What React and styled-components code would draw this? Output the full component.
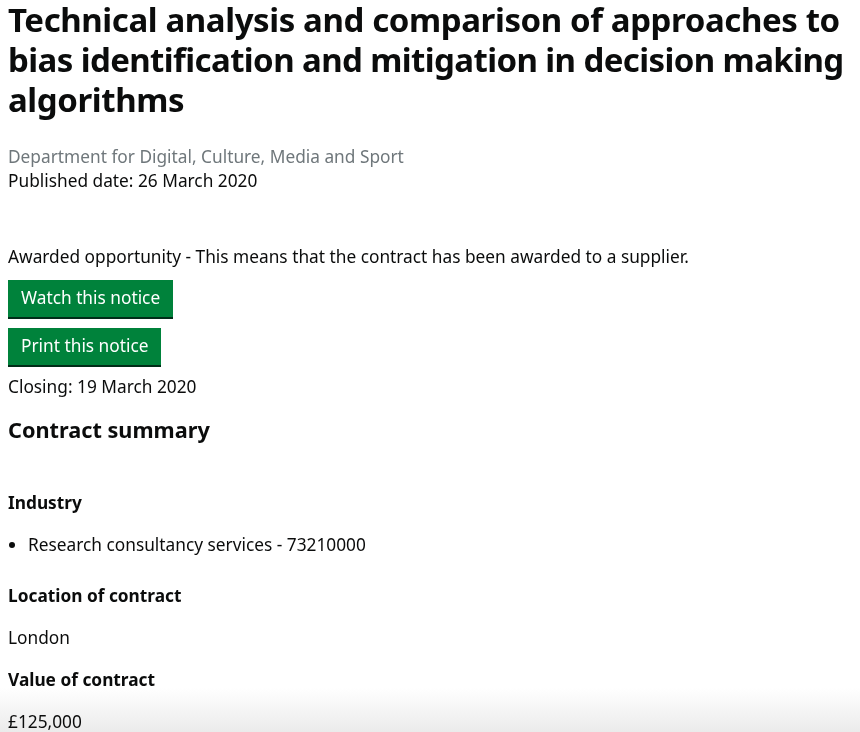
import React from 'react';
import styled, { createGlobalStyle } from 'styled-components';

const GlobalStyle = createGlobalStyle`
  body {
    margin: 0;
    padding: 0 8px;
    background: #fff;
    color: #0b0c0c;
    font-family: "Noto Sans", Arial, sans-serif;
  }
`;

const Page = styled.main`
  padding-bottom: 40px;
`;

const Title = styled.h1`
  margin: 0;
  font-size: 33px;
  line-height: 40px;
  font-weight: 700;
`;

const TitleLine = styled.span`
  display: block;
  white-space: nowrap;
  letter-spacing: ${p => p.$tight ? '-0.6px' : '-0.4px'};
`;

const Meta = styled.div`
  margin-top: 25px;
  font-size: 17.3px;
  line-height: 24px;
`;

const Department = styled.div`
  color: #6f777b;
`;

const Status = styled.p`
  margin: 52px 0 0;
  font-size: 17.3px;
  line-height: 24px;
`;

const Button = styled.button`
  display: block;
  margin: 11px 0 0;
  padding: 6px 13px 7px;
  border: 0;
  background: #00823b;
  color: #fff;
  font-family: inherit;
  font-size: 17.3px;
  line-height: 24px;
  box-shadow: 0 2px 0 #002d18;
  cursor: pointer;
`;

const Closing = styled.p`
  margin: 10px 0 0;
  font-size: 17.3px;
  line-height: 24px;
`;

const SectionTitle = styled.h2`
  margin: 16px 0 0;
  font-size: 21.7px;
  line-height: 30px;
  font-weight: 700;
`;

const FieldLabel = styled.h3`
  margin: ${p => p.$first ? '46px' : '18px'} 0 0;
  font-size: 17.3px;
  line-height: 24px;
  font-weight: 700;
`;

const FieldValue = styled.p`
  margin: 18px 0 0;
  font-size: 17.3px;
  line-height: 24px;
`;

const List = styled.ul`
  margin: 18px 0 27px;
  padding-left: 20px;
  font-size: 17.3px;
  line-height: 24px;
`;

const Fade = styled.div`
  position: fixed;
  z-index: -1;
  left: 0;
  right: 0;
  bottom: 0;
  height: 44px;
  background: linear-gradient(to bottom, #fff, #ebebeb);
  pointer-events: none;
`;

export default function App() {
  return (
    <Page>
      <GlobalStyle />
      <Title>
        <TitleLine>Technical analysis and comparison of approaches to</TitleLine>
        <TitleLine $tight>bias identification and mitigation in decision making</TitleLine>
        <TitleLine>algorithms</TitleLine>
      </Title>
      <Meta>
        <Department>Department for Digital, Culture, Media and Sport</Department>
        <div>Published date: 26 March 2020</div>
      </Meta>
      <Status>Awarded opportunity - This means that the contract has been awarded to a supplier.</Status>
      <Button>Watch this notice</Button>
      <Button>Print this notice</Button>
      <Closing>Closing: 19 March 2020</Closing>
      <SectionTitle>Contract summary</SectionTitle>

      <FieldLabel $first>Industry</FieldLabel>
      <List>
        <li>Research consultancy services - 73210000</li>
      </List>

      <FieldLabel>Location of contract</FieldLabel>
      <FieldValue>London</FieldValue>

      <FieldLabel>Value of contract</FieldLabel>
      <FieldValue>£125,000</FieldValue>
      <Fade />
    </Page>
  );
}
